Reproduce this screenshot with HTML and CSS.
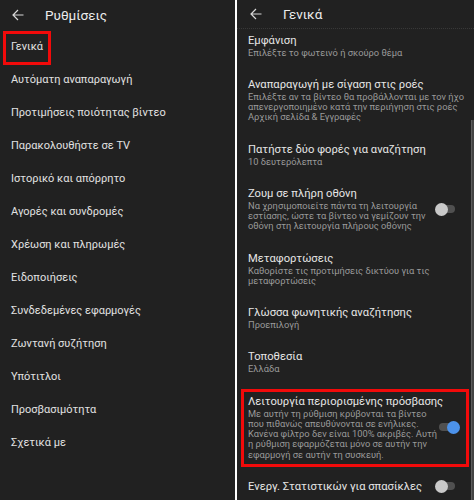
FILE: index.html
```html
<!DOCTYPE html>
<html lang="el">
<head>
<meta charset="utf-8">
<title>Ρυθμίσεις</title>
<link rel="stylesheet" href="styles.css">
</head>
<body>
<div class="screens">
  <section class="panel panel-left">
    <header class="bar">
      <svg class="back" viewBox="0 0 12 12" width="12" height="12"><path d="M11.5 6H1M6 1L1 6l5 5" fill="none" stroke="#d8d8d8" stroke-width="1.2"/></svg>
      <h1 class="bar-title">Ρυθμίσεις</h1>
    </header>
    <ul class="menu">
      <li class="menu-item"><span class="marked">Γενικά</span></li>
      <li class="menu-item">Αυτόματη αναπαραγωγή</li>
      <li class="menu-item">Προτιμήσεις ποιότητας βίντεο</li>
      <li class="menu-item">Παρακολουθήστε σε TV</li>
      <li class="menu-item">Ιστορικό και απόρρητο</li>
      <li class="menu-item">Αγορές και συνδρομές</li>
      <li class="menu-item">Χρέωση και πληρωμές</li>
      <li class="menu-item">Ειδοποιήσεις</li>
      <li class="menu-item">Συνδεδεμένες εφαρμογές</li>
      <li class="menu-item">Ζωντανή συζήτηση</li>
      <li class="menu-item">Υπότιτλοι</li>
      <li class="menu-item">Προσβασιμότητα</li>
      <li class="menu-item">Σχετικά με</li>
    </ul>
  </section>
  <section class="panel panel-right">
    <header class="bar bar-line">
      <svg class="back" viewBox="0 0 12 12" width="12" height="12"><path d="M11.5 6H1M6 1L1 6l5 5" fill="none" stroke="#d8d8d8" stroke-width="1.2"/></svg>
      <h1 class="bar-title">Γενικά</h1>
    </header>
    <div class="settings">
      <div class="setting setting-first">
        <div class="setting-text">
          <div class="setting-title">Εμφάνιση</div>
          <div class="setting-sub">Επιλέξτε το φωτεινό ή σκούρο θέμα</div>
        </div>
      </div>
      <div class="setting">
        <div class="setting-text">
          <div class="setting-title">Αναπαραγωγή με σίγαση στις ροές</div>
          <div class="setting-sub">Επιλέξτε αν τα βίντεο θα προβάλλονται με τον ήχο<br>απενεργοποιημένο κατά την περιήγηση στις ροές<br>Αρχική σελίδα &amp; Εγγραφές</div>
        </div>
      </div>
      <div class="setting">
        <div class="setting-text">
          <div class="setting-title">Πατήστε δύο φορές για αναζήτηση</div>
          <div class="setting-sub">10 δευτερόλεπτα</div>
        </div>
      </div>
      <div class="setting">
        <div class="setting-text">
          <div class="setting-title">Ζουμ σε πλήρη οθόνη</div>
          <div class="setting-sub">Να χρησιμοποιείτε πάντα τη λειτουργία<br>εστίασης, ώστε τα βίντεο να γεμίζουν την<br>οθόνη στη λειτουργία πλήρους οθόνης</div>
        </div>
        <span class="switch"><span class="knob"></span></span>
      </div>
      <div class="setting">
        <div class="setting-text">
          <div class="setting-title">Μεταφορτώσεις</div>
          <div class="setting-sub">Καθορίστε τις προτιμήσεις δικτύου για τις<br>μεταφορτώσεις</div>
        </div>
      </div>
      <div class="setting">
        <div class="setting-text">
          <div class="setting-title">Γλώσσα φωνητικής αναζήτησης</div>
          <div class="setting-sub">Προεπιλογή</div>
        </div>
      </div>
      <div class="setting">
        <div class="setting-text">
          <div class="setting-title">Τοποθεσία</div>
          <div class="setting-sub">Ελλάδα</div>
        </div>
      </div>
      <div class="setting setting-marked">
        <div class="setting-text">
          <div class="setting-title">Λειτουργία περιορισμένης πρόσβασης</div>
          <div class="setting-sub">Με αυτήν τη ρύθμιση κρύβονται τα βίντεο<br>που πιθανώς απευθύνονται σε ενήλικες.<br>Κανένα φίλτρο δεν είναι 100% ακριβές. Αυτή<br>η ρύθμιση εφαρμόζεται μόνο σε αυτήν την<br>εφαρμογή σε αυτήν τη συσκευή.</div>
        </div>
        <span class="switch switch-on"><span class="knob"></span></span>
      </div>
      <div class="setting">
        <div class="setting-text">
          <div class="setting-title">Ενεργ. Στατιστικών για σπασίκλες</div>
        </div>
        <span class="switch"><span class="knob"></span></span>
      </div>
    </div>
    <div class="scrollbar"></div>
  </section>
</div>
</body>
</html>
```
FILE: styles.css
```css
* { box-sizing: border-box; }

html, body {
  margin: 0;
  padding: 0;
  background: #ffffff;
}

body {
  font-family: Roboto, "Noto Sans", "DejaVu Sans", sans-serif;
  width: 474px;
  height: 500px;
  overflow: hidden;
}

.screens {
  display: flex;
  gap: 2px;
  height: 500px;
}

.panel {
  position: relative;
  background: #212121;
  height: 500px;
  overflow: hidden;
  color: #e4e4e4;
}

.panel-left { width: 235px; }
.panel-right { width: 237px; }

.bar {
  display: flex;
  align-items: center;
  height: 30px;
  padding-left: 12px;
}

.panel-right .bar { padding-left: 13px; height: 29px; }

.bar-line {
  border-bottom: 1px dotted #383838;
}

.back { flex: none; display: block; }

.bar-title {
  margin: 0 0 0 21px;
  font-size: 13.5px;
  font-weight: 400;
  color: #ececec;
}

.menu {
  list-style: none;
  margin: 0;
  padding: 0;
}

.menu-item {
  height: 33px;
  line-height: 33px;
  padding-left: 11px;
  font-size: 11px;
  color: #e2e2e2;
}

.marked {
  position: relative;
}

.marked::before {
  content: "";
  position: absolute;
  left: -8px;
  right: -8px;
  top: 50%;
  margin-top: -15.5px;
  height: 28px;
  border: 3px solid #f20a0a;
}

.settings {
  display: flex;
  flex-direction: column;
}

.setting {
  position: relative;
  display: flex;
  align-items: center;
  padding: 10px 15px 10px 11px;
}

.setting-first { padding-top: 4.5px; }

.setting-text {
  flex: 1;
  min-width: 0;
}

.setting-title {
  font-size: 11.2px;
  line-height: 13px;
  color: #e6e6e6;
  white-space: nowrap;
}

.setting-sub {
  margin-top: 1px;
  font-size: 9.3px;
  line-height: 10.25px;
  color: #9a9a9a;
  white-space: nowrap;
}

.setting-marked::after {
  content: "";
  position: absolute;
  left: 4px;
  right: 5px;
  top: 4.5px;
  bottom: 2.5px;
  border: 3px solid #f20a0a;
}

.switch {
  position: relative;
  flex: none;
  width: 24px;
  height: 13px;
  margin-left: 12px;
}

.switch::before {
  content: "";
  position: absolute;
  left: 4px;
  top: 2.5px;
  width: 16px;
  height: 8px;
  border-radius: 4px;
  background: #505050;
}

.knob {
  position: absolute;
  left: 0;
  top: 0;
  width: 13px;
  height: 13px;
  border-radius: 50%;
  background: #c9c9c9;
}

.switch-on .knob {
  left: 12px;
  background: #4c92ea;
}

.scrollbar {
  position: absolute;
  right: 0;
  top: 120px;
  bottom: 0;
  width: 3px;
  background: #444444;
  border-left: 1px solid #5c5c5c;
}
```
